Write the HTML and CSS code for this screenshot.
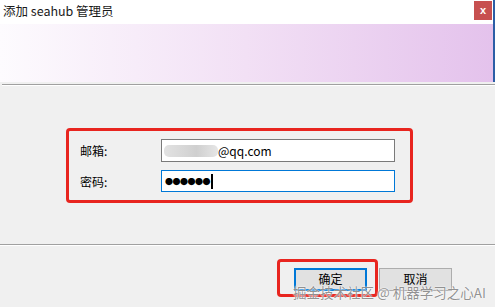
FILE: index.html
```html
<html>
<head>
    <title>添加 seahub 管理员</title>
    <link rel="stylesheet" href="styles.css">
</head>
<body>
    <div class="window">
        <div class="titlebar">
            <span class="title">添加 seahub 管理员</span>
            <div class="close">x</div>
        </div>
        <div class="banner"></div>
        <div class="separator top-sep"></div>
        <div class="content">
            <div class="form">
                <div class="row">
                    <label>邮箱:</label>
                    <div class="field">
                        <span class="blur"></span><span>@qq.com</span>
                    </div>
                </div>
                <div class="row">
                    <label>密码:</label>
                    <div class="field focused">
                        <span class="dots">●●●●●●</span><span class="caret"></span>
                    </div>
                </div>
            </div>
        </div>
        <div class="separator"></div>
        <div class="footer">
            <div class="button primary">确定</div>
            <div class="button">取消</div>
        </div>
        <div class="mark-ok"></div>
        <div class="watermark">掘金技术社区 @ 机器学习之心AI</div>
    </div>
</body>
</html>
```

FILE: styles.css
```css
body {
    margin: 0;
    background-color: #F0F0F0;
    font-family: "Noto Sans CJK SC", "Liberation Sans", sans-serif;
    font-size: 12px;
    color: #000000;
}

.window {
    position: relative;
    width: 495px;
    height: 307px;
    display: flex;
    flex-direction: column;
    overflow: hidden;
}

.titlebar {
    height: 24px;
    background-color: #FFFFFF;
    display: flex;
    align-items: center;
    justify-content: space-between;
    padding-left: 3px;
    border-right: 2px solid #2C5EA6;
    box-sizing: border-box;
}

.title {
    font-size: 12.5px;
    line-height: 14px;
    color: #1A1A1A;
    margin-top: -3px;
}

.close {
    width: 18px;
    height: 19px;
    margin-right: 1px;
    margin-top: -3px;
    background-color: #C75050;
    color: #FFFFFF;
    font: bold 11px "Liberation Sans", sans-serif;
    text-align: center;
    line-height: 18px;
}

.banner {
    height: 58px;
    background: linear-gradient(to right, #FDFBFE 0%, #F2E0F5 50%, #E4C2EC 100%);
    border-right: 2px solid #2C5EA6;
}

.separator {
    height: 0;
    border-top: 1px solid #A0A0A0;
    border-bottom: 1px solid #FFFFFF;
}

.top-sep {
    margin: 2px 0 0 2px;
}

.content {
    height: 158px;
    padding: 42px 0 0 66px;
    box-sizing: border-box;
}

.form {
    width: 347px;
    height: 75px;
    box-sizing: border-box;
    border: 3px solid #E8251F;
    border-radius: 4px;
    padding: 8px 15px 0 11px;
    display: flex;
    flex-direction: column;
    gap: 8px;
}

.row {
    display: flex;
    align-items: center;
}

.row label {
    width: 81px;
    font-size: 12px;
}

.field {
    flex: 1;
    height: 23px;
    box-sizing: border-box;
    border: 1px solid #7A7A7A;
    background-color: #FFFFFF;
    display: flex;
    align-items: center;
    padding-left: 2px;
    font-size: 12px;
}

.field.focused {
    border-color: #0078D7;
    height: 22px;
}

.blur {
    display: inline-block;
    width: 54px;
    height: 12px;
    border-radius: 5px;
    background: linear-gradient(to right, #E2E2E2, #D6D6D6 40%, #CFCFCF 60%, #E6E6E6);
}

.dots {
    font-size: 8px;
    letter-spacing: -0.5px;
    margin-left: 1px;
}

.caret {
    display: inline-block;
    width: 2px;
    height: 15px;
    background-color: #000000;
    margin-left: 1px;
}

.footer {
    flex: 1;
    display: flex;
    justify-content: flex-end;
    gap: 12px;
    padding: 22px 43px 0 0;
}

.button {
    width: 73px;
    height: 23px;
    box-sizing: border-box;
    border: 1px solid #ADADAD;
    background-color: #E1E1E1;
    text-align: center;
    line-height: 19px;
    font-size: 12px;
}

.button.primary {
    border: 2px solid #0078D7;
    line-height: 17px;
}

.mark-ok {
    position: absolute;
    left: 277px;
    top: 259px;
    width: 101px;
    height: 38px;
    box-sizing: border-box;
    border: 3px solid #E8251F;
    border-radius: 4px;
}

.watermark {
    position: absolute;
    left: 293px;
    top: 282px;
    font-size: 13.5px;
    color: rgba(110, 110, 110, 0.75);
    text-shadow: 0 0 2px #FFFFFF, 0 0 1px #FFFFFF;
    white-space: nowrap;
}
```
